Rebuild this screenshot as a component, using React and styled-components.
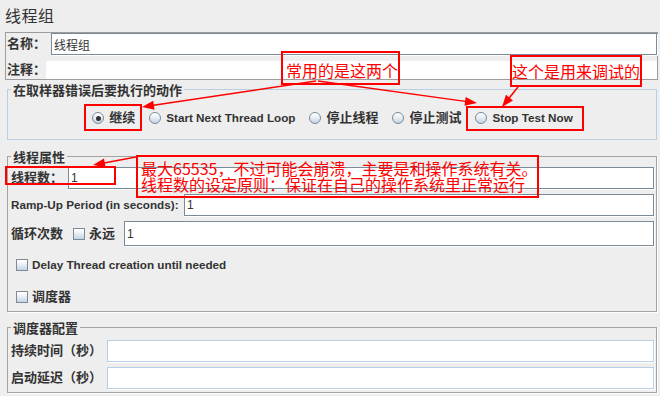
import React from 'react';
import styled, { createGlobalStyle } from 'styled-components';

const Global = createGlobalStyle`
  html, body { margin: 0; padding: 0; background: #eeeeee; }
  body { font-family: "Liberation Sans", "Noto Sans CJK SC", sans-serif; color: #333333; }
  #root { width: 660px; height: 396px; overflow: hidden; }
`;

const Page = styled.div`
  position: relative;
  width: 660px;
  height: 396px;
  display: flex;
  flex-direction: column;
  background: #eeeeee;
  overflow: hidden;
`;

const Title = styled.h1`
  margin: 0;
  height: 32px;
  box-sizing: border-box;
  padding: 5px 0 0 5px;
  font: 400 16px/20px "Noto Sans CJK SC", sans-serif;
  letter-spacing: 0.5px;
  color: #333333;
`;

const NamePanel = styled.div`
  margin: 0 2px 0 5px;
  border: 1px solid #9c9c9c;
  padding: 0 0 0 1px;
  display: flex;
  flex-direction: column;
  gap: 6px;
`;

const Row = styled.div`
  display: flex;
  align-items: center;
  height: ${p => p.$h || 22}px;
  margin-top: ${p => p.$mt || 0}px;
`;

const Label = styled.span`
  flex: none;
  width: ${p => (p.$w ? `${p.$w}px` : 'auto')};
  font-family: "Liberation Sans", "Noto Sans CJK SC", sans-serif;
  font-weight: 700;
  font-size: ${p => (p.$latin ? '11.7px' : '13px')};
  line-height: 16px;
  color: #333333;
  white-space: nowrap;
`;

const Field = styled.input.attrs({ readOnly: true, type: 'text' })`
  flex: 1;
  min-width: 0;
  align-self: stretch;
  box-sizing: border-box;
  margin: 0;
  padding: 0 0 0 2px;
  background: #ffffff;
  border: ${p =>
    p.$tone === 'plain'
      ? 'none'
      : p.$tone === 'soft'
      ? '1px solid #b8cfe5'
      : '1px solid #7a8a99'};
  box-shadow: ${p => (p.$tone === 'plain' ? 'none' : '1px 1px 0 #ffffff')};
  font: 400 12px "Liberation Sans", "Noto Sans CJK SC", sans-serif;
  color: #333333;
  outline: none;
`;

const Group = styled.fieldset`
  margin: ${p => p.$mt || 0}px 3px 0 7px;
  padding: 0 2px ${p => p.$pb || 0}px 3px;
  min-width: 0;
  border: 1px solid ${p => (p.$tone === 'blue' ? '#b8cfe5' : '#a3a3a3')};
  box-shadow: ${p => (p.$tone === 'blue' ? 'none' : '1px 1px 0 #ffffff')};
  display: flex;
  flex-direction: column;
`;

const Legend = styled.legend`
  padding: 3px 2px 0;
  font: 700 13px/16px "Liberation Sans", "Noto Sans CJK SC", sans-serif;
  color: #333333;
`;

const RadioRow = styled.div`
  display: flex;
  justify-content: center;
  align-items: center;
  gap: 14px;
  height: 22px;
  margin-top: 8px;
`;

const Option = styled.label`
  display: flex;
  align-items: center;
  gap: ${p => p.$gap || 5}px;
  margin-left: ${p => p.$ml || 0}px;
  margin-right: ${p => p.$mr || 0}px;
`;

const RadioDot = styled.span`
  flex: none;
  width: 12px;
  height: 12px;
  box-sizing: border-box;
  border-radius: 50%;
  border: 1px solid #7a8a99;
  background: linear-gradient(#ffffff 10%, #c3d3e3);
  display: flex;
  align-items: center;
  justify-content: center;
  &::after {
    content: '';
    width: 5px;
    height: 5px;
    border-radius: 50%;
    background: #333333;
    display: ${p => (p.$on ? 'block' : 'none')};
  }
`;

const CheckBox = styled.span`
  flex: none;
  width: 12px;
  height: 12px;
  box-sizing: border-box;
  border: 1px solid #7a8a99;
  background: linear-gradient(#ffffff 10%, #c3d3e3);
`;

const Note = styled.div`
  position: absolute;
  left: ${p => p.$x}px;
  top: ${p => p.$y}px;
  width: ${p => p.$w}px;
  height: ${p => p.$h}px;
  box-sizing: border-box;
  border: 2px solid #ff0000;
  padding: ${p => p.$pad || '0'};
  color: #ff0000;
  font: 400 16px/16px "Noto Sans CJK SC", sans-serif;
  white-space: nowrap;
  overflow: visible;
  pointer-events: none;
`;

const ArrowLayer = styled.svg`
  position: absolute;
  left: 0;
  top: 0;
  width: 660px;
  height: 396px;
  pointer-events: none;
  overflow: visible;
`;

function Arrow({ x1, y1, x2, y2 }) {
  const dx = x2 - x1;
  const dy = y2 - y1;
  const len = Math.hypot(dx, dy);
  const ux = dx / len;
  const uy = dy / len;
  const hl = 12;
  const hw = 4.5;
  const bx = x2 - ux * hl;
  const by = y2 - uy * hl;
  const px = -uy;
  const py = ux;
  const pts = `${x2},${y2} ${bx + px * hw},${by + py * hw} ${bx - px * hw},${by - py * hw}`;
  return (
    <g>
      <line x1={x1} y1={y1} x2={bx + ux * 2} y2={by + uy * 2} stroke="#ff0000" strokeWidth="1.5" />
      <polygon points={pts} fill="#ff0000" />
    </g>
  );
}

function Radio({ label, on, latin }) {
  return (
    <Option>
      <RadioDot $on={on} />
      <Label $latin={latin}>{label}</Label>
    </Option>
  );
}

export default function App() {
  return (
    <Page>
      <Global />
      <Title>线程组</Title>

      <NamePanel>
        <Row $h={22}>
          <Label $w={44}>名称：</Label>
          <Field value="线程组" />
        </Row>
        <Row $h={18}>
          <Label $w={39}>注释：</Label>
          <Field $tone="plain" value="" />
        </Row>
      </NamePanel>

      <Group $tone="blue" $pb={10}>
        <Legend>在取样器错误后要执行的动作</Legend>
        <RadioRow>
          <Radio label="继续" on />
          <Radio label="Start Next Thread Loop" latin />
          <Radio label="停止线程" />
          <Radio label="停止测试" />
          <Radio label="Stop Test Now" latin />
        </RadioRow>
      </Group>

      <Group $mt={7} $pb={3}>
        <Legend>线程属性</Legend>
        <Row $mt={1}>
          <Label $w={57}>线程数：</Label>
          <Field value="1" />
        </Row>
        <Row $mt={5}>
          <Label $w={173} $latin>Ramp-Up Period (in seconds):</Label>
          <Field value="1" />
        </Row>
        <Row $mt={5} $h={25}>
          <Label $w={62}>循环次数</Label>
          <Option $gap={4} $mr={9}>
            <CheckBox />
            <Label>永远</Label>
          </Option>
          <Field value="1" />
        </Row>
        <Row $mt={8}>
          <Option $gap={4} $ml={5}>
            <CheckBox />
            <Label $latin>Delay Thread creation until needed</Label>
          </Option>
        </Row>
        <Row $mt={10}>
          <Option $gap={4} $ml={5}>
            <CheckBox />
            <Label>调度器</Label>
          </Option>
        </Row>
      </Group>

      <Group $mt={6} $pb={3}>
        <Legend>调度器配置</Legend>
        <Row $mt={3}>
          <Label $w={96}>持续时间（秒）</Label>
          <Field $tone="soft" value="" />
        </Row>
        <Row $mt={5}>
          <Label $w={96}>启动延迟（秒）</Label>
          <Field $tone="soft" value="" />
        </Row>
      </Group>

      <Note $x={84} $y={104} $w={58} $h={27} />
      <Note $x={466} $y={106} $w={118} $h={25} />
      <Note $x={5} $y={166} $w={111} $h={19} />

      <Note $x={281} $y={51} $w={119} $h={34} $pad="9px 0 0 3px">常用的是这两个</Note>
      <Note $x={510} $y={55} $w={132} $h={32} $pad="6px 0 0 0">这个是用来调试的</Note>
      <Note $x={136} $y={155} $w={403} $h={43} $pad="3px 0 0 3px">
        最大65535，不过可能会崩溃，主要是和操作系统有关。
        <br />
        线程数的设定原则：保证在自己的操作系统里正常运行
      </Note>

      <ArrowLayer viewBox="0 0 660 396">
        <Arrow x1={316} y1={81} x2={142} y2={107} />
        <Arrow x1={318} y1={81} x2={477} y2={103} />
        <Arrow x1={518} y1={87} x2={502} y2={107} />
        <Arrow x1={136} y1={157} x2={93} y2={165} />
      </ArrowLayer>
    </Page>
  );
}
